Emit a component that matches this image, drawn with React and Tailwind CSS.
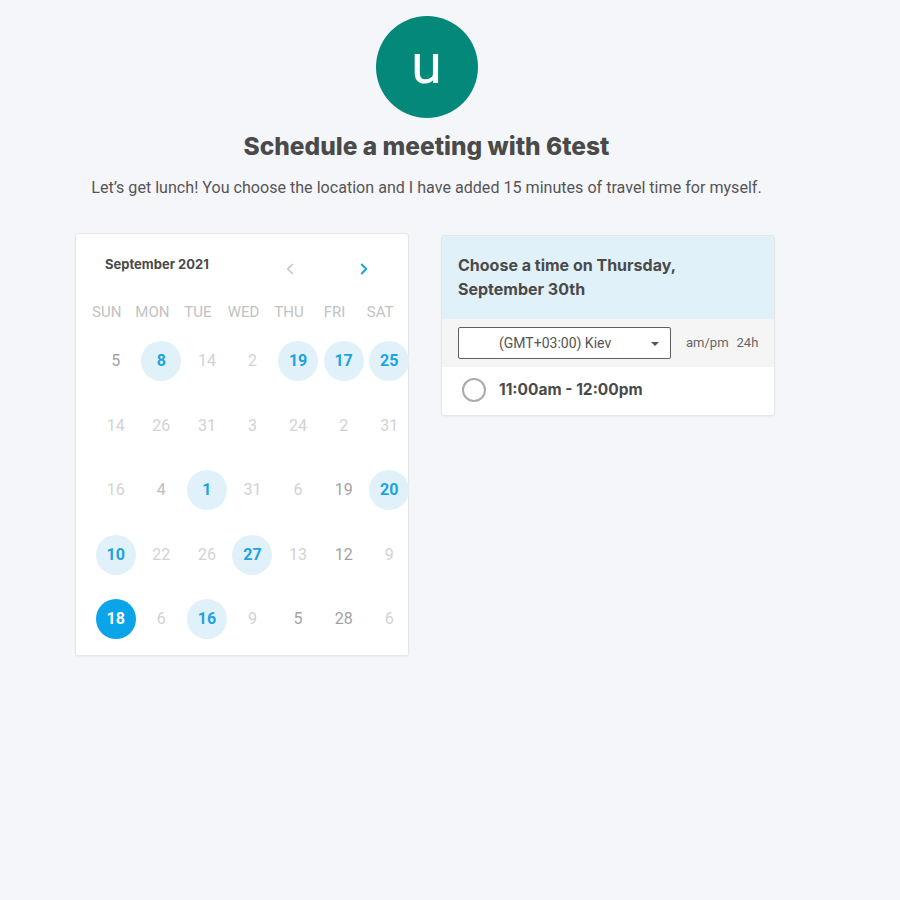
import { ChevronLeft, ChevronRight } from 'lucide-react'

const HEADERS = ['SUN', 'MON', 'TUE', 'WED', 'THU', 'FRI', 'SAT']

// a = available, s = selected, d = darker gray, m = mid gray, l = light
const ROWS = [
  [['5', 'd'], ['8', 'a'], ['14', 'l'], ['2', 'l'], ['19', 'a'], ['17', 'a'], ['25', 'a']],
  [['14', 'l'], ['26', 'l'], ['31', 'l'], ['3', 'l'], ['24', 'l'], ['2', 'l'], ['31', 'l']],
  [['16', 'l'], ['4', 'm'], ['1', 'a'], ['31', 'l'], ['6', 'l'], ['19', 'd'], ['20', 'a']],
  [['10', 'a'], ['22', 'l'], ['26', 'l'], ['27', 'a'], ['13', 'l'], ['12', 'd'], ['9', 'l']],
  [['18', 's'], ['6', 'l'], ['16', 'a'], ['9', 'l'], ['5', 'd'], ['28', 'd'], ['6', 'l']],
]

function Day({ label, kind }) {
  if (kind === 'a' || kind === 's') {
    return (
      <div
        className={`w-10 h-10 rounded-full flex items-center justify-center font-bold text-[16px] ${
          kind === 's' ? 'bg-[#0aa4e8] text-white' : 'bg-[#e1f1f9] text-[#1ca3e2]'
        }`}
      >
        {label}
      </div>
    )
  }
  const color = kind === 'd' ? 'text-[#a3a3a3]' : kind === 'm' ? 'text-[#bdbdbd]' : 'text-[#d2d2d2]'
  return <span className={`text-[16px] ${color}`}>{label}</span>
}

function Calendar() {
  return (
    <div className="w-[334px] h-[423px] bg-white border border-[#e4e6ea] rounded-[3px] shadow-[0_1px_2px_rgba(0,0,0,0.04)] mt-[233px]">
      <div className="flex items-center h-[30px] mt-[16px] pl-[29px]">
        <span className="text-[13px] font-bold text-[#4a4a4a] font-['Inter',sans-serif] w-[176px]">
          September 2021
        </span>
        <ChevronLeft size={18} strokeWidth={2.2} className="text-[#c4c4c4] mt-[8px]" />
        <ChevronRight size={18} strokeWidth={2.6} className="text-[#1ca3e2] mt-[8px] ml-[56px]" />
      </div>
      <div className="grid grid-cols-7 w-[319px] ml-[8px] mt-[21px] h-[20px] items-center">
        {HEADERS.map((h) => (
          <span key={h} className="text-center text-[15px] text-[#c2c2c2]">
            {h}
          </span>
        ))}
      </div>
      <div className="ml-[17px] w-[319px] mt-[8px]">
        {ROWS.map((row, i) => (
          <div key={i} className="grid grid-cols-7 h-[64.5px] items-center">
            {row.map(([label, kind], j) => (
              <div key={j} className="flex justify-center">
                <Day label={label} kind={kind} />
              </div>
            ))}
          </div>
        ))}
      </div>
    </div>
  )
}

function TimePanel() {
  return (
    <div className="w-[334px] bg-white border border-[#e4e6ea] rounded-[3px] shadow-[0_1px_2px_rgba(0,0,0,0.04)] mt-[235px] overflow-hidden">
      <div className="h-[83px] bg-[#e1f1f9] pt-[17px] pl-[16px] font-['Inter',sans-serif] font-bold text-[16px] leading-[24px] text-[#4a4a4a]">
        <div>Choose a time on Thursday,</div>
        <div>September 30th</div>
      </div>
      <div className="h-[48px] bg-[#f5f5f5] flex items-center pl-[16px]">
        <div className="w-[213px] h-[32px] bg-white border border-[#5f5f5f] rounded-[2px] flex items-center relative">
          <span className="text-[14px] text-[#555] pl-[40px]">(GMT+03:00) Kiev</span>
          <span className="absolute right-[11px] top-[14px] w-0 h-0 border-l-[4px] border-r-[4px] border-t-[4px] border-l-transparent border-r-transparent border-t-[#555]" />
        </div>
        <span className="ml-[15px] text-[13px] text-[#666]">am/pm</span>
        <span className="ml-[8px] text-[13px] text-[#666]">24h</span>
      </div>
      <div className="h-[48px] flex items-center pl-[20px] pb-[3px]">
        <div className="w-[24px] h-[24px] rounded-full border-2 border-[#aaaaaa]" />
        <span className="ml-[13px] font-['Inter',sans-serif] font-bold text-[15.5px] text-[#4a4a4a]">
          11:00am - 12:00pm
        </span>
      </div>
    </div>
  )
}

export default function App() {
  return (
    <div className="w-[900px] h-[900px] bg-[#f5f6fa] font-['Roboto',sans-serif] relative overflow-hidden">
      <div className="absolute left-0 top-0 w-[853px] flex flex-col items-center pt-[16px]">
        <div className="w-[102px] h-[102px] rounded-full bg-[#03887a] flex items-center justify-center">
          <span className="text-white text-[56px] leading-none mb-[6px]">u</span>
        </div>
        <h1 className="mt-[12px] font-['Inter',sans-serif] font-extrabold text-[24.5px] leading-[32px] text-[#4a4a4a]">
          Schedule a meeting with 6test
        </h1>
        <p className="mt-[15px] text-[16.1px] leading-[22px] text-[#555]">
          Let’s get lunch! You choose the location and I have added 15 minutes of travel time for myself.
        </p>
      </div>
      <div className="flex items-start pl-[75px] gap-[32px]">
        <Calendar />
        <TimePanel />
      </div>
    </div>
  )
}
